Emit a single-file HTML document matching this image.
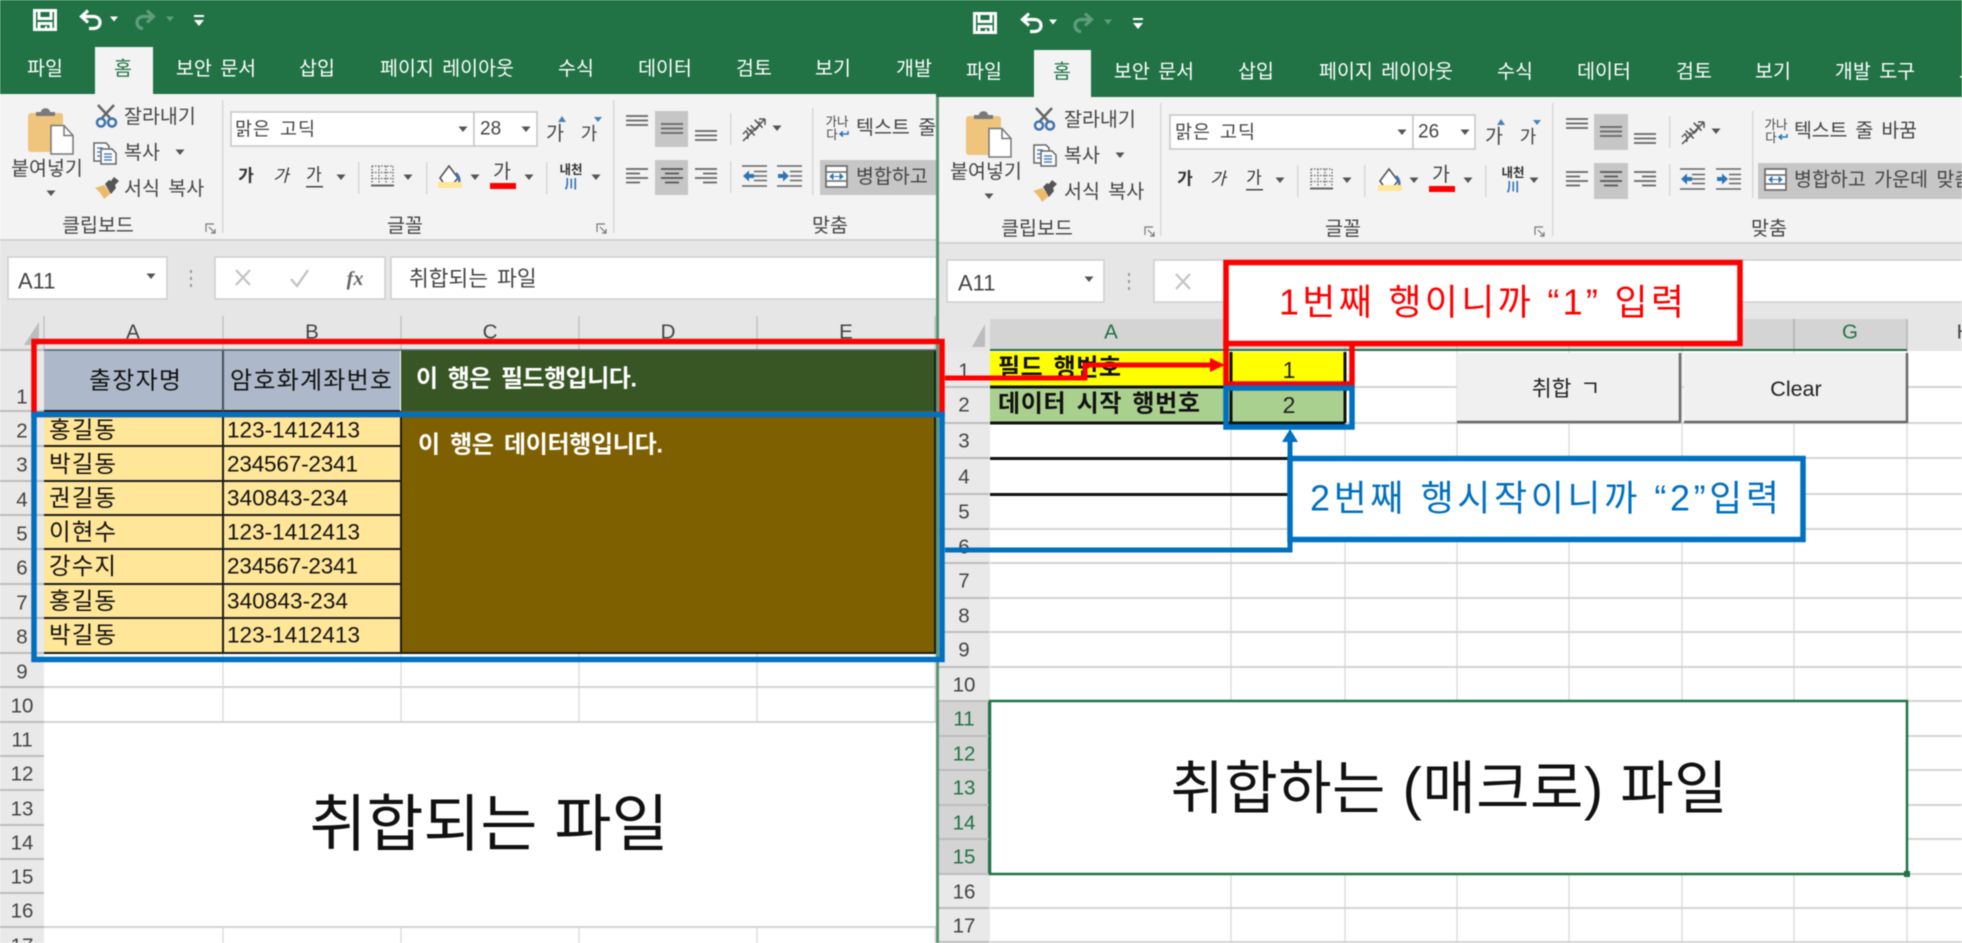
<!DOCTYPE html>
<html lang="ko">
<head>
<meta charset="utf-8">
<title>Excel</title>
<style>
html,body{margin:0;padding:0;background:#fff;width:1962px;height:943px;overflow:hidden}
svg{display:block;position:absolute;left:0;top:0;filter:blur(.45px)}
text{font-family:"Liberation Sans","Noto Sans CJK KR",sans-serif;dominant-baseline:central;white-space:pre}
.tab{font-size:19.5px;fill:#fff;text-anchor:middle;word-spacing:3px}
.r{font-size:19.5px;fill:#444;word-spacing:3px}
.rc{font-size:19.5px;fill:#444;text-anchor:middle}
.g{font-size:19.5px;fill:#444;text-anchor:middle}
.s{font-size:17px;fill:#333;text-anchor:middle}
.hd{font-size:20.5px;fill:#444;text-anchor:middle}
.hs{font-size:20.5px;fill:#217346;text-anchor:middle}
.d{font-size:23.5px;fill:#111}
.dn{font-size:22.5px;fill:#111}
.w{font-size:24px;fill:#fff;font-weight:700;word-spacing:4px}
.k{font-size:24px;fill:#111;font-weight:700;word-spacing:3px}
</style>
</head>
<body>
<svg width="1962" height="943" viewBox="0 0 1962 943" xmlns="http://www.w3.org/2000/svg">
<defs>
<clipPath id="lc"><rect x="0" y="0" width="936" height="943"/></clipPath>
<path id="dd" d="M-4.5 -2.5h9l-4.5 5.5z" fill="#555"/>
<path id="ddw" d="M-4 -2.5h8l-4 5z" fill="#fff"/>
<path id="ddg" d="M-4 -2.5h8l-4 5z" fill="#5f9c7c"/>
<g id="save" fill="none" stroke="#fff" stroke-width="3">
<path d="M1.5 1.5h21v19h-21z"/><path d="M6 1.5v8h12v-8"/><path d="M6 20.5v-6h12v6"/><path d="M13 17v3" stroke-width="2"/>
</g>
<g id="undo" fill="none" stroke="#fff" stroke-width="3.2">
<path d="M4 7.5h11c5 0 7 3 7 6s-2 6-7 6h-4"/><path d="M10 1.5l-6.5 6 6.5 6"/>
</g>
<g id="redo" fill="none" stroke="#5f9c7c" stroke-width="3.2">
<path d="M18 7.5h-9c-5 0-7 3-7 6s2 6 6 6"/><path d="M12 1.5l6.5 6-6.5 6"/>
</g>
<g id="cust" fill="#fff"><rect x="-5" y="-6" width="10" height="2"/><path d="M-5 -1h10l-5 6z"/></g>
<g id="paste">
<path d="M3 6h29a3 3 0 0 1 3 3v36h-32a3 3 0 0 1-3-3v-33a3 3 0 0 1 3-3z" fill="#efc47d"/>
<path d="M8 9v-4h5c0-5 9-5 9 0h5v4z" fill="#7a7a7a"/>
<path d="M23 18.500h13l9 10v18.500h-22z" fill="#fff" stroke="#777" stroke-width="1.500"/>
<path d="M36 18.500v10h9" fill="none" stroke="#777" stroke-width="1.500"/>
</g>
<g id="sci" fill="none">
<path d="M7 14L19 1M15 14L3 1" stroke="#666" stroke-width="2.500"/>
<circle cx="6" cy="18.500" r="4" stroke="#3f74b0" stroke-width="2.500"/>
<circle cx="17" cy="18.500" r="4" stroke="#3f74b0" stroke-width="2.500"/>
</g>
<g id="copy" fill="#fff" stroke="#666" stroke-width="1.500">
<path d="M1 1h12l3 3v15h-15z"/>
<path d="M8 7h11l4 4v11h-15z"/>
<path d="M4 6h6M4 10h3M4 14h3M11 12h8M11 15h8M11 18h8" stroke="#4a80b8"/>
</g>
<g id="paint">
<path d="M0 11l9-3 7 8-7 6c-2-4-5-8-9-11z" fill="#e9bb6b"/>
<path d="M10 7l4-4 2 1 3-4 5 4-4 4 1 3-5 6z" fill="#555"/>
</g>
<g id="bord" fill="none" stroke="#666">
<path d="M1 1h21v18M1 1v18M1 7.500h21M1 13.500h21M8 1v18M15 1v18" stroke-dasharray="1.500 1.500" stroke-width="1.300"/>
<path d="M0 20.500h23" stroke-width="2"/>
</g>
<g id="fillc">
<path d="M11 1l9 12-6 7h-7l-5-7z" fill="#fff" stroke="#555" stroke-width="1.600"/>
<path d="M18 8c3 3 4 6 3 10" fill="none" stroke="#3f74b0" stroke-width="2.500"/>
<rect x="0" y="17" width="24" height="6" fill="#ffe699"/>
</g>
<g id="aT" stroke="#666" stroke-width="1.800"><path d="M0 1h22M0 5.500h22M0 10h22"/></g>
<g id="aL" stroke="#666" stroke-width="1.800"><path d="M0 1h22M0 5.500h14M0 10h22M0 14.500h14"/></g>
<g id="aC" stroke="#555" stroke-width="1.800"><path d="M0 1h22M4 5.500h14M0 10h22M4 14.500h14"/></g>
<g id="aR" stroke="#666" stroke-width="1.800"><path d="M0 1h22M8 5.500h14M0 10h22M8 14.500h14"/></g>
<g id="outd">
<path d="M0 1h25M12 6.500h13M12 11h13M12 15.500h13M0 21h25" stroke="#666" stroke-width="1.600"/>
<path d="M1 11l6-5.500v3.500h5v4h-5v3.500z" fill="#2f75b5"/>
</g>
<g id="ind">
<path d="M0 1h25M13 6.500h12M13 11h12M13 15.500h12M0 21h25" stroke="#666" stroke-width="1.600"/>
<path d="M12 11l-6-5.500v3.500h-5v4h5v3.500z" fill="#2f75b5"/>
</g>
<g id="merge">
<rect x="1" y="1" width="21" height="21" fill="#fff" stroke="#666" stroke-width="1.600"/>
<path d="M1 7h21M1 16h21" stroke="#666" stroke-width="1.500"/>
<path d="M5 11.500h13M5 11.500l3-2.500v5zM18 11.500l-3-2.500v5z" stroke="#2f75b5" fill="#2f75b5" stroke-width="1"/>
</g>
<g id="launch" fill="none" stroke="#777" stroke-width="1.200"><path d="M9 1h-8v8"/><path d="M4 4l6 6M10 6v4h-4"/></g>
</defs>

<!-- ============ LEFT WINDOW ============ -->
<g clip-path="url(#lc)">
<rect x="0" y="0" width="940" height="94" fill="#217346"/>
<rect x="0" y="94" width="940" height="145" fill="#f3f3f3"/>
<rect x="0" y="239" width="940" height="2" fill="#d2d2d2"/>
<rect x="0" y="241" width="940" height="110" fill="#e6e6e6"/>
<use href="#save" x="33" y="9"/>
<use href="#undo" x="78" y="9"/>
<use href="#ddw" x="114" y="19"/>
<use href="#redo" x="135" y="9"/>
<use href="#ddg" x="170" y="19"/>
<use href="#cust" x="199" y="21"/>
<rect x="95" y="47" width="58" height="48" fill="#f3f3f3"/>
<text class="tab" x="45" y="69">파일</text>
<text class="tab" x="123" y="69" style="fill:#217346">홈</text>
<text class="tab" x="216" y="69">보안 문서</text>
<text class="tab" x="317" y="69">삽입</text>
<text class="tab" x="447" y="69">페이지 레이아웃</text>
<text class="tab" x="576" y="69">수식</text>
<text class="tab" x="665" y="69">데이터</text>
<text class="tab" x="754" y="69">검토</text>
<text class="tab" x="833" y="69">보기</text>
<text class="tab" x="914" y="69">개발</text>

<use href="#paste" x="28" y="107"/>
<text class="g" x="47" y="169">붙여넣기</text>
<use href="#dd" x="51" y="193"/>
<use href="#sci" x="95" y="104"/>
<text class="r" x="124" y="117">잘라내기</text>
<use href="#copy" x="93" y="142"/>
<text class="r" x="124" y="153">복사</text>
<use href="#dd" x="180" y="152"/>
<use href="#paint" x="95" y="177"/>
<text class="r" x="124" y="189">서식 복사</text>
<text class="g" x="98" y="226">클립보드</text>
<use href="#launch" x="205" y="223"/>
<rect x="222" y="100" width="1.500" height="133" fill="#d8d8d8"/>

<rect x="231" y="112" width="243" height="34" fill="#fff" stroke="#c6c6c6" stroke-width="1.500"/>
<rect x="474" y="112" width="63" height="34" fill="#fff" stroke="#c6c6c6" stroke-width="1.500"/>
<text class="r" x="235" y="129" style="font-size:18.500px" textLength="80">맑은 고딕</text>
<use href="#dd" x="463" y="129"/>
<text class="r" x="480" y="129" style="font-size:19px">28</text>
<use href="#dd" x="526" y="129"/>
<text class="rc" x="555" y="134">가</text>
<path d="M558 122l4-6 4 6z" fill="#4a80b8"/>
<text class="rc" x="589" y="134" style="font-size:18px">가</text>
<path d="M594 117h8l-4 5z" fill="#4a80b8"/>
<text class="s" x="246" y="176" style="font-weight:700">가</text>
<text class="s" x="281" y="176" style="font-style:italic">가</text>
<text class="s" x="314" y="175">가</text>
<rect x="306" y="186" width="17" height="1.500" fill="#444"/>
<use href="#dd" x="341" y="177"/>
<rect x="358" y="162" width="1.500" height="32" fill="#d8d8d8"/>
<use href="#bord" x="371" y="165"/>
<use href="#dd" x="408" y="177"/>
<rect x="426" y="162" width="1.500" height="32" fill="#d8d8d8"/>
<use href="#fillc" x="438" y="165"/>
<use href="#dd" x="475" y="177"/>
<text class="rc" x="502" y="172">가</text>
<rect x="490" y="183" width="26" height="6" fill="#f00"/>
<use href="#dd" x="529" y="177"/>
<rect x="546" y="162" width="1.500" height="32" fill="#d8d8d8"/>
<text class="s" x="571" y="170" style="font-size:12.500px;font-weight:700">내천</text>
<text class="s" x="571" y="184" style="font-size:13px;font-weight:700;fill:#2f75b5">川</text>
<use href="#dd" x="596" y="177"/>
<text class="g" x="405" y="226">글꼴</text>
<use href="#launch" x="596" y="223"/>
<rect x="613" y="100" width="1.500" height="133" fill="#d8d8d8"/>

<use href="#aT" x="626" y="115"/>
<rect x="655" y="111" width="33" height="36" fill="#c6c6c6"/>
<use href="#aT" x="661" y="123"/>
<use href="#aT" x="695" y="130"/>
<rect x="730" y="113" width="1.500" height="32" fill="#d8d8d8"/>
<text class="s" x="753" y="130" transform="rotate(-45 753 130)" style="font-size:12px;font-weight:700;fill:#555">가나</text>
<path d="M743 141l22-22M765 119h-6M765 119v6" stroke="#555" stroke-width="1.500" fill="none"/>
<use href="#dd" x="777" y="128"/>
<rect x="812" y="108" width="1.500" height="87" fill="#d8d8d8"/>
<use href="#aL" x="626" y="168"/>
<rect x="655" y="160" width="33" height="35" fill="#c6c6c6"/>
<use href="#aC" x="661" y="168"/>
<use href="#aR" x="695" y="168"/>
<rect x="730" y="161" width="1.500" height="32" fill="#d8d8d8"/>
<use href="#outd" x="742" y="165"/>
<use href="#ind" x="777" y="165"/>
<text class="s" x="837" y="122" style="font-size:12.500px;font-weight:400;fill:#444">가나</text>
<text class="s" x="832" y="135" style="font-size:12.500px;fill:#444">다</text>
<path d="M848 131v3h-7M843 131.500l-3 2.500 3 2.500" stroke="#2f75b5" fill="none" stroke-width="1.500"/>
<text class="r" x="856" y="128">텍스트 줄 바꿈</text>
<rect x="820" y="160" width="120" height="35" fill="#c6c6c6"/>
<use href="#merge" x="825" y="165"/>
<text class="r" x="856" y="177">병합하고 가운데 맞춤</text>
<text class="g" x="830" y="226">맞춤</text>

<!-- formula -->
<rect x="8" y="257" width="159" height="42" fill="#fff" stroke="#cfcfcf" stroke-width="1.500"/>
<text class="r" x="18" y="281" style="font-size:22px">A11</text>
<use href="#dd" x="151" y="276"/>
<path d="M191 270v3M191 277v3M191 284v3" stroke="#9a9a9a" stroke-width="2"/>
<rect x="215" y="257" width="170" height="42" fill="#fff" stroke="#cfcfcf" stroke-width="1.500"/>
<path d="M236 270l14 15M250 270l-14 15" stroke="#c4c4c4" stroke-width="2.200"/>
<path d="M291 279l6 7 11-16" stroke="#c4c4c4" stroke-width="2.400" fill="none"/>
<text x="355" y="279" style="font-family:'Liberation Serif',serif;font-style:italic;font-weight:700;font-size:20px;fill:#666;text-anchor:middle">fx</text>
<rect x="391" y="257" width="560" height="42" fill="#fff" stroke="#cfcfcf" stroke-width="1.500"/>
<text x="409" y="279" style="font-size:21.500px;fill:#444;word-spacing:3px">취합되는 파일</text>

<!-- column headers -->
<path d="M39 322v23h-15z" fill="#bdbdbd"/>
<path d="M44 316v34M223 316v34M401 316v34M579 316v34M757 316v34M935 316v34" stroke="#c4c4c4" stroke-width="1.500"/>
<text class="hd" x="133" y="332">A</text>
<text class="hd" x="312" y="332">B</text>
<text class="hd" x="490" y="332">C</text>
<text class="hd" x="668" y="332">D</text>
<text class="hd" x="846" y="332">E</text>

<!-- row headers -->
<rect x="0" y="350" width="44" height="593" fill="#e9e9e9"/>
<g stroke="#bcbcbc" stroke-width="2">
<path d="M0 350h44M0 411h44M0 446h44M0 481h44M0 515h44M0 549h44M0 584h44M0 618h44M0 653h44M0 687h44M0 722h44M0 756h44M0 790h44M0 825h44M0 859h44M0 893h44M0 927h44"/>
</g>
<text class="hd" x="22" y="397">1</text>
<g transform="translate(0,1)">
<text class="hd" x="22" y="430">2</text>
<text class="hd" x="22" y="464">3</text>
<text class="hd" x="22" y="499">4</text>
<text class="hd" x="22" y="533">5</text>
<text class="hd" x="22" y="567">6</text>
<text class="hd" x="22" y="602">7</text>
<text class="hd" x="22" y="636">8</text>
<text class="hd" x="22" y="671">9</text>
<text class="hd" x="22" y="705">10</text>
<text class="hd" x="22" y="739">11</text>
<text class="hd" x="22" y="773">12</text>
<text class="hd" x="22" y="808">13</text>
<text class="hd" x="22" y="842">14</text>
<text class="hd" x="22" y="876">15</text>
<text class="hd" x="22" y="910">16</text>
<text class="hd" x="22" y="945">17</text>
</g>

<!-- grid -->
<rect x="44" y="350" width="892" height="593" fill="#fff"/>
<g stroke="#dedede" stroke-width="1.500">
<path d="M223 653v70M401 653v70M579 653v70M757 653v70M935 653v70M223 927v16M401 927v16M579 927v16M757 927v16M935 927v16"/>
</g>
<g stroke="#d4d4d4" stroke-width="2"><path d="M44 687h892M44 722h892M44 927h892"/></g>

<!-- table -->
<rect x="44" y="350" width="356" height="61" fill="#adb9ca"/>
<rect x="401" y="350" width="535" height="61" fill="#375623"/>
<rect x="44" y="411" width="356" height="242" fill="#ffe699"/>
<rect x="401" y="411" width="535" height="242" fill="#7f6000"/>
<g stroke="#1c1c1c" stroke-width="2">
<path d="M44 411h356M44 446h356M44 481h356M44 515h356M44 549h356M44 584h356M44 618h356M44 653h892"/>
<path d="M223 350v303M401 411v242M935 350v303"/>
</g>
<path d="M223 350v61M44 350h892" stroke="#555f6e" stroke-width="1.500"/>
<text x="135" y="381" class="d" style="text-anchor:middle;font-size:24px" textLength="92">출장자명</text>
<text x="311" y="381" class="d" style="text-anchor:middle;font-size:24px" textLength="162">암호화계좌번호</text>
<text class="w" x="416" y="379" textLength="221">이 행은 필드행입니다.</text>
<text class="w" x="418" y="445" textLength="245">이 행은 데이터행입니다.</text>
<text class="d" x="49" y="430" textLength="67">홍길동</text>
<text class="d" x="49" y="464" textLength="67">박길동</text>
<text class="d" x="49" y="498" textLength="67">권길동</text>
<text class="d" x="49" y="532" textLength="67">이현수</text>
<text class="d" x="49" y="566" textLength="67">강수지</text>
<text class="d" x="49" y="601" textLength="67">홍길동</text>
<text class="d" x="49" y="635" textLength="67">박길동</text>
<text class="dn" x="227" y="430" textLength="133">123-1412413</text>
<text class="dn" x="227" y="464" textLength="131">234567-2341</text>
<text class="dn" x="227" y="498" textLength="121">340843-234</text>
<text class="dn" x="227" y="532" textLength="133">123-1412413</text>
<text class="dn" x="227" y="566" textLength="131">234567-2341</text>
<text class="dn" x="227" y="601" textLength="121">340843-234</text>
<text class="dn" x="227" y="635" textLength="133">123-1412413</text>

<text x="489" y="825" style="font-size:62px;fill:#111;text-anchor:middle" textLength="359">취합되는 파일</text>
</g>

<!-- ============ RIGHT WINDOW ============ -->
<rect x="936" y="0" width="1026" height="97" fill="#217346"/>
<rect x="936" y="97" width="3" height="846" fill="#217346" opacity=".75"/>
<rect x="939" y="97" width="1023" height="145" fill="#f3f3f3"/>
<rect x="939" y="242" width="1023" height="2" fill="#d2d2d2"/>
<rect x="939" y="244" width="1023" height="107" fill="#e6e6e6"/>
<use href="#save" x="973" y="12"/>
<use href="#undo" x="1019" y="12"/>
<use href="#ddw" x="1053" y="22"/>
<use href="#redo" x="1073" y="12"/>
<use href="#ddg" x="1108" y="22"/>
<use href="#cust" x="1138" y="24"/>
<rect x="1034" y="50" width="57" height="48" fill="#f3f3f3"/>
<text class="tab" x="984" y="72">파일</text>
<text class="tab" x="1062" y="72" style="fill:#217346">홈</text>
<text class="tab" x="1154" y="72">보안 문서</text>
<text class="tab" x="1256" y="72">삽입</text>
<text class="tab" x="1386" y="72">페이지 레이아웃</text>
<text class="tab" x="1515" y="72">수식</text>
<text class="tab" x="1604" y="72">데이터</text>
<text class="tab" x="1694" y="72">검토</text>
<text class="tab" x="1773" y="72">보기</text>
<text class="tab" x="1875" y="72">개발 도구</text>
<text class="tab" x="1959" y="72" style="text-anchor:start">도움말</text>

<use href="#paste" x="966" y="110"/>
<text class="g" x="986" y="172">붙여넣기</text>
<use href="#dd" x="989" y="196"/>
<use href="#sci" x="1033" y="107"/>
<text class="r" x="1064" y="120">잘라내기</text>
<use href="#copy" x="1033" y="144"/>
<text class="r" x="1064" y="156">복사</text>
<use href="#dd" x="1120" y="155"/>
<use href="#paint" x="1033" y="180"/>
<text class="r" x="1064" y="192">서식 복사</text>
<text class="g" x="1037" y="229">클립보드</text>
<use href="#launch" x="1144" y="226"/>
<rect x="1160" y="103" width="1.500" height="133" fill="#d8d8d8"/>

<rect x="1170" y="115" width="243" height="34" fill="#fff" stroke="#c6c6c6" stroke-width="1.500"/>
<rect x="1413" y="115" width="62" height="34" fill="#fff" stroke="#c6c6c6" stroke-width="1.500"/>
<text class="r" x="1175" y="132" style="font-size:18.500px" textLength="80">맑은 고딕</text>
<use href="#dd" x="1402" y="132"/>
<text class="r" x="1418" y="132" style="font-size:19px">26</text>
<use href="#dd" x="1465" y="132"/>
<text class="rc" x="1494" y="137">가</text>
<path d="M1497 125l4-6 4 6z" fill="#4a80b8"/>
<text class="rc" x="1528" y="137" style="font-size:18px">가</text>
<path d="M1533 120h8l-4 5z" fill="#4a80b8"/>
<text class="s" x="1185" y="179" style="font-weight:700">가</text>
<text class="s" x="1218" y="179" style="font-style:italic">가</text>
<text class="s" x="1254" y="178">가</text>
<rect x="1246" y="189" width="17" height="1.500" fill="#444"/>
<use href="#dd" x="1280" y="180"/>
<rect x="1297" y="165" width="1.500" height="32" fill="#d8d8d8"/>
<use href="#bord" x="1310" y="168"/>
<use href="#dd" x="1347" y="180"/>
<rect x="1364" y="165" width="1.500" height="32" fill="#d8d8d8"/>
<use href="#fillc" x="1378" y="168"/>
<use href="#dd" x="1414" y="180"/>
<text class="rc" x="1441" y="175">가</text>
<rect x="1429" y="186" width="26" height="6" fill="#f00"/>
<use href="#dd" x="1468" y="180"/>
<rect x="1485" y="165" width="1.500" height="32" fill="#d8d8d8"/>
<text class="s" x="1513" y="173" style="font-size:12.500px;font-weight:700">내천</text>
<text class="s" x="1513" y="187" style="font-size:13px;font-weight:700;fill:#2f75b5">川</text>
<use href="#dd" x="1534" y="180"/>
<text class="g" x="1343" y="229">글꼴</text>
<use href="#launch" x="1534" y="226"/>
<rect x="1552" y="103" width="1.500" height="133" fill="#d8d8d8"/>

<use href="#aT" x="1566" y="118"/>
<rect x="1594" y="114" width="34" height="36" fill="#c6c6c6"/>
<use href="#aT" x="1600" y="126"/>
<use href="#aT" x="1634" y="133"/>
<rect x="1669" y="116" width="1.500" height="32" fill="#d8d8d8"/>
<text class="s" x="1692" y="133" transform="rotate(-45 1692 133)" style="font-size:12px;font-weight:700;fill:#555">가나</text>
<path d="M1682 144l22-22M1704 122h-6M1704 122v6" stroke="#555" stroke-width="1.500" fill="none"/>
<use href="#dd" x="1716" y="131"/>
<rect x="1752" y="111" width="1.500" height="87" fill="#d8d8d8"/>
<use href="#aL" x="1566" y="171"/>
<rect x="1594" y="163" width="34" height="36" fill="#c6c6c6"/>
<use href="#aC" x="1600" y="171"/>
<use href="#aR" x="1634" y="171"/>
<rect x="1669" y="164" width="1.500" height="32" fill="#d8d8d8"/>
<use href="#outd" x="1680" y="168"/>
<use href="#ind" x="1716" y="168"/>
<text class="s" x="1776" y="125" style="font-size:12.500px;fill:#444">가나</text>
<text class="s" x="1771" y="138" style="font-size:12.500px;fill:#444">다</text>
<path d="M1787 134v3h-7M1782 134.500l-3 2.500 3 2.500" stroke="#2f75b5" fill="none" stroke-width="1.500"/>
<text class="r" x="1794" y="131" textLength="123">텍스트 줄 바꿈</text>
<rect x="1758" y="163" width="204" height="36" fill="#c6c6c6"/>
<use href="#merge" x="1764" y="168"/>
<text class="r" x="1794" y="180">병합하고 가운데 맞춤</text>
<text class="g" x="1769" y="229">맞춤</text>

<!-- formula -->
<rect x="947" y="260" width="157" height="42" fill="#fff" stroke="#cfcfcf" stroke-width="1.500"/>
<text class="r" x="958" y="283" style="font-size:22px">A11</text>
<use href="#dd" x="1089" y="279"/>
<path d="M1129 273v3M1129 280v3M1129 287v3" stroke="#9a9a9a" stroke-width="2"/>
<rect x="1154" y="260" width="810" height="42" fill="#fff" stroke="#cfcfcf" stroke-width="1.500"/>
<path d="M1176 274l14 15M1190 274l-14 15" stroke="#c4c4c4" stroke-width="2.200"/>

<!-- col header -->
<rect x="990" y="319" width="917" height="32" fill="#d4d4d4"/>
<path d="M985 324v23h-13z" fill="#bdbdbd"/>
<path d="M1345 319v32M1457 319v32M1569 319v32M1682 319v32M1794 319v32" stroke="#c0c0c0" stroke-width="1.500"/>
<path d="M1794 319v32M1907 319v32" stroke="#b5b5b5" stroke-width="1.500"/>
<rect x="990" y="349" width="917" height="2.500" fill="#217346"/>
<text class="hs" x="1111" y="332">A</text>
<text class="hs" x="1850" y="332">G</text>
<text class="hd" x="1964" y="332">H</text>

<!-- right grid -->
<rect x="939" y="351" width="1023" height="592" fill="#fff"/>
<rect x="939" y="351" width="51" height="592" fill="#e9e9e9"/>
<rect x="939" y="701" width="51" height="173" fill="#d4d4d4"/>
<rect x="988" y="701" width="2.500" height="173" fill="#217346"/>
<g stroke="#dedede" stroke-width="1.500">
<path d="M1231 351v592M1345 351v592M1457 351v592M1569 351v592M1682 351v592M1794 351v592M1907 351v592"/>
</g>
<g stroke="#d4d4d4" stroke-width="2">
<path d="M990 387h972M990 423h972M990 458h972M990 494h972M990 529h972M990 563h972M990 598h972M990 632h972M990 667h972M990 701h972M990 736h972M990 770h972M990 805h972M990 839h972M990 874h972M990 908h972M990 942h972"/>
</g>
<g stroke="#bcbcbc" stroke-width="2">
<path d="M939 387h50M939 423h50M939 458h50M939 494h50M939 529h50M939 563h50M939 598h50M939 632h50M939 667h50M939 701h50M939 736h50M939 770h50M939 805h50M939 839h50M939 874h50M939 908h50M939 942h50"/>
</g>
<text class="hd" x="964" y="371">1</text>
<text class="hd" x="964" y="405">2</text>
<text class="hd" x="964" y="441">3</text>
<text class="hd" x="964" y="477">4</text>
<text class="hd" x="964" y="512">5</text>
<text class="hd" x="964" y="547">6</text>
<text class="hd" x="964" y="581">7</text>
<text class="hd" x="964" y="616">8</text>
<text class="hd" x="964" y="650">9</text>
<text class="hd" x="964" y="685">10</text>
<text class="hs" x="964" y="719">11</text>
<text class="hs" x="964" y="754">12</text>
<text class="hs" x="964" y="788">13</text>
<text class="hs" x="964" y="823">14</text>
<text class="hs" x="964" y="857">15</text>
<text class="hd" x="964" y="892">16</text>
<text class="hd" x="964" y="926">17</text>

<!-- right cells -->
<rect x="990" y="352" width="241" height="35" fill="#ffff00"/>
<rect x="1231" y="352" width="114" height="35" fill="#ffff00"/>
<rect x="990" y="387" width="241" height="36" fill="#a9d08e"/>
<rect x="1231" y="387" width="114" height="36" fill="#a9d08e"/>
<g stroke="#111" stroke-width="3" fill="none">
<path d="M990 387h355M990 423h355M1231 352v71M1345 352v71"/>
<path d="M990 458.500h300M990 494.500h300"/>
</g>
<text class="k" x="998" y="368" textLength="123">필드 행번호</text>
<text class="k" x="998" y="404" textLength="202">데이터 시작 행번호</text>
<text x="1289" y="370" style="font-size:23px;fill:#222;text-anchor:middle">1</text>
<text x="1289" y="405" style="font-size:23px;fill:#222;text-anchor:middle">2</text>

<!-- buttons -->
<rect x="1457" y="353" width="223" height="70" fill="#f0f0f0"/>
<path d="M1457 422h223M1680 353v70" stroke="#696969" stroke-width="2.500" fill="none"/>
<rect x="1684" y="353" width="223" height="70" fill="#f0f0f0"/>
<path d="M1684 422h223M1907 353v70" stroke="#696969" stroke-width="2.500" fill="none"/>
<text x="1566" y="389" style="font-size:21.500px;fill:#222;text-anchor:middle;word-spacing:3px">취합 ㄱ</text>
<text x="1796" y="389" style="font-size:21.500px;fill:#222;text-anchor:middle">Clear</text>

<!-- selected merged cell -->
<rect x="990" y="701" width="917" height="173" fill="#fff" stroke="#217346" stroke-width="2.500"/>
<rect x="1904" y="871" width="6" height="6" fill="#217346"/>
<text x="1449" y="789" style="font-size:58px;fill:#111;text-anchor:middle" textLength="557">취합하는 (매크로) 파일</text>

<!-- ============ ANNOTATIONS ============ -->
<rect x="34" y="341.500" width="908" height="73" fill="none" stroke="#f00" stroke-width="5.500"/>
<path d="M945 378H1085V365H1212" fill="none" stroke="#f00" stroke-width="5"/>
<path d="M1225 365l-15-7v14z" fill="#f00"/>
<rect x="1226" y="343" width="126" height="41" fill="none" stroke="#f00" stroke-width="5.500"/>
<rect x="34" y="414.500" width="908" height="245" fill="none" stroke="#0070c0" stroke-width="5.500"/>
<path d="M945 550H1290V440" fill="none" stroke="#0070c0" stroke-width="5"/>
<path d="M1290 429l-8 13h16z" fill="#0070c0"/>
<rect x="1226" y="388" width="126" height="39" fill="none" stroke="#0070c0" stroke-width="5.500"/>
<rect x="1226" y="262.500" width="514" height="81" fill="#fff" stroke="#f00" stroke-width="5.500"/>
<rect x="1290" y="458.500" width="513" height="81" fill="#fff" stroke="#0070c0" stroke-width="5.500"/>
<text x="1279" y="302" style="font-size:36px;fill:#f00" textLength="405">1번째 행이니까 “1” 입력</text>
<text x="1310" y="498" style="font-size:36px;fill:#0070c0" textLength="469">2번째 행시작이니까 “2”입력</text>
</svg>
</body>
</html>
